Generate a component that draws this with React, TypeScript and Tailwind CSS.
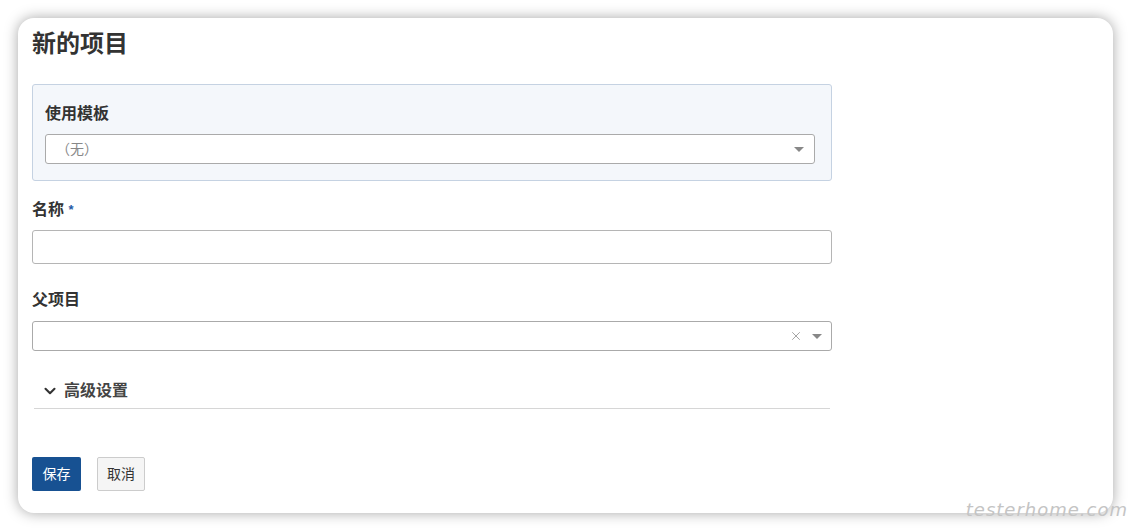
import { ChevronDown, X } from 'lucide-react';

const cjk = { fontFamily: '"Liberation Sans", "Noto Sans CJK SC", sans-serif' };

function Caret() {
  return (
    <svg width="10" height="5" viewBox="0 0 10 5" className="shrink-0">
      <path d="M0 0 L10 0 L5 5 Z" fill="#888" />
    </svg>
  );
}

export default function App() {
  return (
    <div className="relative w-[1131px] h-[531px] bg-white overflow-hidden" style={cjk}>
      <div className="ml-[18px] mt-[18px] w-[1095px] h-[495px] bg-white rounded-[16px] shadow-[0_0_14px_rgba(0,0,0,0.35)] pl-[14px] pt-[10px]">
        {/* Title */}
        <h2 className="text-[24px] leading-[32px] font-semibold text-[#333]">新的项目</h2>

        <div className="w-[800px]">
          {/* Template box */}
          <div className="mt-[24px] bg-[#f4f7fb] border border-[#c5d2e2] rounded-[3px] pl-[12px] pr-[16px] pt-[19px] pb-[16px]">
            <label className="block text-[16px] leading-[20px] font-bold text-[#333]">使用模板</label>
            <div className="mt-[10px] h-[30px] bg-white border border-[#aaa] rounded-[3px] flex items-center pl-[10px] pr-[10px]">
              <span className="flex-1 text-[14px] text-[#888]">（无）</span>
              <Caret />
            </div>
          </div>

          {/* Name */}
          <label className="block mt-[19px] text-[16px] leading-[20px] font-bold text-[#333]">
            名称 <span className="text-[#1f5aa6] text-[13px] align-top">*</span>
          </label>
          <input className="mt-[10px] block w-full h-[34px] border border-[#b5b5b5] rounded-[3px] bg-white outline-none" />

          {/* Parent */}
          <label className="block mt-[26px] text-[16px] leading-[20px] font-bold text-[#333]">父项目</label>
          <div className="mt-[11px] h-[30px] bg-white border border-[#aaa] rounded-[3px] flex items-center justify-end gap-[9px] pr-[9px]">
            <X size={14} strokeWidth={1.3} className="text-[#888]" />
            <Caret />
          </div>

          {/* Advanced */}
          <div className="mt-[30px] mx-[2px] flex items-center gap-[5px] pl-[7px] pb-[7px] border-b border-[#d6d6d6]">
            <ChevronDown size={18} strokeWidth={2.8} className="text-[#333]" />
            <span className="text-[16px] leading-[20px] font-bold text-[#444]">高级设置</span>
          </div>

          {/* Buttons */}
          <div className="mt-[48px] flex gap-[16px]">
            <button className="h-[34px] w-[49px] bg-[#175192] text-white text-[14px] rounded-[2px]">保存</button>
            <button className="h-[34px] w-[48px] bg-[#f5f5f5] border border-[#ccc] text-[#333] text-[14px] rounded-[2px]">取消</button>
          </div>
        </div>
      </div>

      {/* watermark */}
      <div className="absolute right-[3px] bottom-[8px] text-[18px] tracking-[1px] font-light text-[#c4c4c4] italic" style={{ fontFamily: '"DejaVu Sans", sans-serif' }}>
        testerhome.com
      </div>
    </div>
  );
}
